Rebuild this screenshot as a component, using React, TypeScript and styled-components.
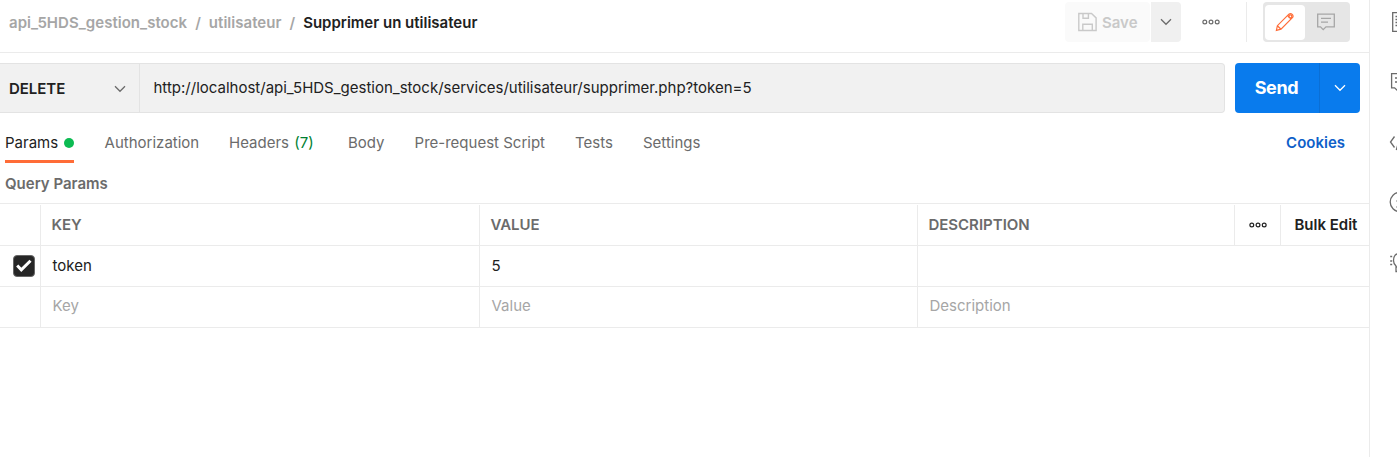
import React from 'react';
import styled, { createGlobalStyle } from 'styled-components';

const GlobalStyle = createGlobalStyle`
  * { box-sizing: border-box; }
  body { margin: 0; background: #fff; overflow: hidden; font-family: Inter, "Liberation Sans", sans-serif; font-size: 15px; color: #212121; }
`;

const line = '#ebebeb';

const Shell = styled.div`
  display: flex;
  width: 1397px;
  height: 457px;
  overflow: hidden;
`;
const Main = styled.main`
  width: 1369px;
  flex: none;
`;
const Rail = styled.aside`
  flex: 1;
  min-width: 0;
  overflow: hidden;
  border-left: 1px solid ${line};
  display: flex;
  flex-direction: column;
  gap: 36px;
  padding: 10px 0 0 19px;
`;
const Glyph = styled.svg<{ $color?: string }>`
  display: block;
  flex: none;
  fill: none;
  stroke: ${(p) => p.$color ?? '#6b6b6b'};
`;
const Header = styled.header`
  display: flex;
  justify-content: space-between;
  height: 53px;
  border-bottom: 1px solid ${line};
  padding: 2px 19px 0 9px;
`;
const Crumbs = styled.nav`
  display: flex;
  height: 40px;
  line-height: 41px;
  gap: 8px;
  font-weight: 600;
  color: #a6a6a6;
`;
const Crumb = styled.span<{ $current?: boolean }>`
  color: ${(p) => (p.$current ? '#212121' : 'inherit')};
  letter-spacing: ${(p) => (p.$current ? '0' : '0.035px')};
`;
const Tools = styled.div`
  display: flex;
  height: 40px;
`;
const SaveButton = styled.button`
  display: flex;
  align-items: center;
  gap: 5px;
  width: 85px;
  border: 0;
  border-radius: 4px;
  background: #fafafa;
  padding: 0 0 0 13px;
  font: 600 15px Inter, sans-serif;
  color: #c9c9c9;
`;
const SaveMenu = styled.button`
  display: grid;
  place-items: center;
  width: 30px;
  margin-left: 1px;
  border: 0;
  border-radius: 0 4px 4px 0;
  background: #f0f0f0;
  padding: 0;
`;
const MoreButton = styled.div`
  display: grid;
  place-items: center;
  width: 60px;
`;
const Separator = styled.div`
  width: 1px;
  margin: 0 16px 0 5px;
  background: ${line};
`;
const ModeSwitch = styled.div`
  display: flex;
  width: 87px;
  padding: 3px 2px 2px;
  border-radius: 4px;
  background: #e6e6e6;
`;
const Mode = styled.div<{ $active?: boolean }>`
  display: grid;
  place-items: center;
  width: ${(p) => (p.$active ? 40 : 42)}px;
  padding-bottom: 1px;
  border-radius: 4px;
  background: ${(p) => (p.$active ? '#fff' : 'transparent')};
`;
const RequestBar = styled.div`
  display: flex;
  height: 50px;
  margin: 10px 9px 0 0;
`;
const Method = styled.div`
  display: flex;
  align-items: center;
  justify-content: space-between;
  width: 140px;
  border: solid #e3e3e3;
  border-width: 1px 1px 1px 0;
  background: #f1f1f1;
  padding: 1px 13px 0 9px;
  font-weight: 600;
  font-size: 15px;
  letter-spacing: -0.05px;
`;
const Url = styled.div`
  width: 1085px;
  border: 1px solid #e3e3e3;
  border-left: 0;
  border-radius: 0 4px 4px 0;
  background: #f1f1f1;
  padding-left: 13.5px;
  line-height: 47px;
`;
const SendGroup = styled.div`
  display: flex;
  width: 125px;
  margin-left: 10px;
  border-radius: 4px;
  overflow: hidden;
  background: #097bed;
`;
const Send = styled.button`
  width: 85px;
  border: 0;
  border-right: 1px solid #0a6fd6;
  background: transparent;
  padding: 0 1px 1px 0;
  font: 700 18px Inter, sans-serif;
  letter-spacing: -0.35px;
  color: #fff;
`;
const SendMenu = styled.button`
  display: grid;
  place-items: center;
  flex: 1;
  border: 0;
  background: transparent;
  padding: 0;
`;
const Tabs = styled.div`
  display: flex;
  height: 50px;
  padding: 9px 24px 0 5px;
  line-height: 42px;
  color: #6b6b6b;
`;
const Tab = styled.div<{ $width: number }>`
  width: ${(p) => p.$width}px;
  white-space: nowrap;
`;
const ActiveTab = styled.div`
  display: flex;
  align-items: center;
  justify-content: space-between;
  width: 69px;
  height: 41px;
  padding-top: 4px;
  border-bottom: 3px solid #ff6c37;
  color: #212121;
`;
const Dot = styled.span`
  width: 10px;
  height: 10px;
  border-radius: 50%;
  background: #0cbb52;
`;
const Count = styled.span`
  margin-left: 1px;
  color: #007f31;
`;
const Cookies = styled.a`
  margin-left: auto;
  font-weight: 600;
  color: #0f5fc9;
`;
const SectionTitle = styled.h2`
  height: 40px;
  margin: 0;
  padding-left: 5px;
  font-size: 15px;
  font-weight: 600;
  line-height: 42px;
  color: #6b6b6b;
`;
const Table = styled.div`
  border-top: 1px solid ${line};
`;
const Row = styled.div<{ $head?: boolean }>`
  display: grid;
  grid-template-columns: ${(p) => (p.$head ? '41px 439px 438px 317px 46px 88px' : '41px 439px 438px 451px')};
  height: ${(p) => (p.$head ? 42 : 41)}px;
  border-bottom: 1px solid ${line};
  padding-top: ${(p) => (p.$head ? 1 : 0)}px;
`;
const Cell = styled.div<{ $kind?: 'head' | 'hint' | 'action' }>`
  border-right: 1px solid ${line};
  padding-left: ${(p) => (p.$kind === 'head' ? 10.4 : p.$kind === 'action' ? 13.4 : 11.5)}px;
  line-height: ${(p) => (p.$kind === 'hint' ? 38 : p.$kind ? 39 : 40)}px;
  font-weight: ${(p) => (p.$kind === 'head' || p.$kind === 'action' ? 600 : 400)};
  color: ${(p) => (p.$kind === 'head' ? '#6b6b6b' : p.$kind === 'hint' ? '#a6a6a6' : '#212121')};
  &:last-child { border-right: 0; }
`;
const IconCell = styled.div`
  display: grid;
  place-items: center;
  border-right: 1px solid ${line};
`;
const CheckCell = styled.div`
  display: flex;
  align-items: center;
  padding-left: 13px;
  border-right: 1px solid ${line};
`;
const Check = styled.span`
  display: grid;
  place-items: center;
  width: 22px;
  height: 22px;
  border-radius: 4px;
  border: 1px solid #666;
  background: #262626;
`;

const Chevron = ({ color }: { color: string }) => (
  <Glyph width="12" height="8" viewBox="0 0 12 8" $color={color} strokeWidth="1.3">
    <path d="M1 1.2 6 6.3l5-5.1" />
  </Glyph>
);
const Dots = ({ color }: { color: string }) => (
  <Glyph width="20" height="8" viewBox="0 0 20 8" $color={color} strokeWidth="1.2">
    <circle cx="3.800" cy="4" r="1.900" />
    <circle cx="10" cy="4" r="1.900" />
    <circle cx="16.200" cy="4" r="1.900" />
  </Glyph>
);
const CommentIcon = ({ color }: { color: string }) => (
  <Glyph width="20" height="20" viewBox="0 0 20 20" $color={color} strokeWidth="1.3">
    <path d="M1.700 2.200h16.600v12.600H10l-2.800 2.800-2.700-2.800H1.700zM5 6.300h10M5 10.200h7" />
  </Glyph>
);

export default function App() {
  return (
    <>
      <GlobalStyle />
      <Shell>
        <Main>
          <Header>
            <Crumbs>
              <Crumb>api_5HDS_gestion_stock</Crumb>
              <span>/</span>
              <Crumb>utilisateur</Crumb>
              <span>/</span>
              <Crumb $current>Supprimer un utilisateur</Crumb>
            </Crumbs>
            <Tools>
              <SaveButton>
                <Glyph width="19" height="20" viewBox="0 0 19 20" $color="#c9c9c9" strokeWidth="1.4">
                  <path d="M.8 1.5h12.700l4.600 4.400v12.600H.8zM5 1.800v4.400h5.400V1.800M4.800 18.500v-6.300h9.500v6.300" />
                </Glyph>
                Save
              </SaveButton>
              <SaveMenu><Chevron color="#6b6b6b" /></SaveMenu>
              <MoreButton><Dots color="#6b6b6b" /></MoreButton>
              <Separator />
              <ModeSwitch>
                <Mode $active>
                  <Glyph width="20" height="20" viewBox="0 0 20 20" $color="#ff6c37" strokeWidth="1.200">
                    <path d="m1.400 18.400 1-4.700L13.900 2.200q1.700-1.400 3.300.2t.2 3.300L6 17.200zM12.600 3.500l3.700 3.600M2.400 13.700 6 17.200" />
                    <circle cx="15.300" cy="4.400" r="1.500" />
                  </Glyph>
                </Mode>
                <Mode><CommentIcon color="#a6a6a6" /></Mode>
              </ModeSwitch>
            </Tools>
          </Header>
          <RequestBar>
            <Method>DELETE<Chevron color="#6b6b6b" /></Method>
            <Url>http://localhost/api_5HDS_gestion_stock/services/utilisateur/supprimer.php?token=5</Url>
            <SendGroup>
              <Send>Send</Send>
              <SendMenu><Chevron color="#fff" /></SendMenu>
            </SendGroup>
          </RequestBar>
          <Tabs>
            <Tab $width={99.600}><ActiveTab>Params<Dot /></ActiveTab></Tab>
            <Tab $width={124.400}>Authorization</Tab>
            <Tab $width={119}>Headers <Count>(7)</Count></Tab>
            <Tab $width={66.600}>Body</Tab>
            <Tab $width={160.400}>Pre-request Script</Tab>
            <Tab $width={68}>Tests</Tab>
            <Tab $width={70}>Settings</Tab>
            <Cookies>Cookies</Cookies>
          </Tabs>
          <SectionTitle>Query Params</SectionTitle>
          <Table>
            <Row $head>
              <Cell />
              <Cell $kind="head">KEY</Cell>
              <Cell $kind="head">VALUE</Cell>
              <Cell $kind="head">DESCRIPTION</Cell>
              <IconCell><Dots color="#212121" /></IconCell>
              <Cell $kind="action">Bulk Edit</Cell>
            </Row>
            <Row>
              <CheckCell>
                <Check>
                  <Glyph width="16" height="14" viewBox="0 0 16 14" $color="#fff" strokeWidth="3">
                    <path d="m1.200 6.500 4.100 4.300 9.200-9" />
                  </Glyph>
                </Check>
              </CheckCell>
              <Cell>token</Cell>
              <Cell>5</Cell>
              <Cell />
            </Row>
            <Row>
              <Cell />
              <Cell $kind="hint">Key</Cell>
              <Cell $kind="hint">Value</Cell>
              <Cell $kind="hint">Description</Cell>
            </Row>
          </Table>
        </Main>
        <Rail>
          <Glyph width="24" height="24" viewBox="0 0 24 24" strokeWidth="1.300">
            <path d="M3.700 2.600h14v18.800h-14zM6.500 6.500h8M6.500 9.500h8M6.500 12.500h8M6.500 15.500h8" />
          </Glyph>
          <Glyph width="24" height="24" viewBox="0 0 24 24" strokeWidth="1.300">
            <path d="M2.600 3.600h18v14.200h-9l-3 3-3-3h-3zM6 8h10M6 12h7" />
          </Glyph>
          <Glyph width="24" height="24" viewBox="0 0 24 24" strokeWidth="1.300">
            <path d="M5.500 6.500 1.500 12l4 5.500M12 4 7.300 20M17 6.500l4 5.500-4 5.500" />
          </Glyph>
          <Glyph width="24" height="24" viewBox="0 0 24 24" strokeWidth="1.300">
            <circle cx="10.800" cy="12" r="9.600" />
            <path d="M7.500 11h4v6M7.500 17h8M10 7h2" />
          </Glyph>
          <Glyph width="24" height="24" viewBox="0 0 24 24" strokeWidth="1.300">
            <path d="M7 16q-2.500-2-2.500-5.500 0-7 6.500-7t6.500 7Q17.500 14 15 16v5.500H7zM7 17h8M1.200 6.500h2M1.200 11h2M1.200 14.500h2" />
          </Glyph>
        </Rail>
      </Shell>
    </>
  );
}
